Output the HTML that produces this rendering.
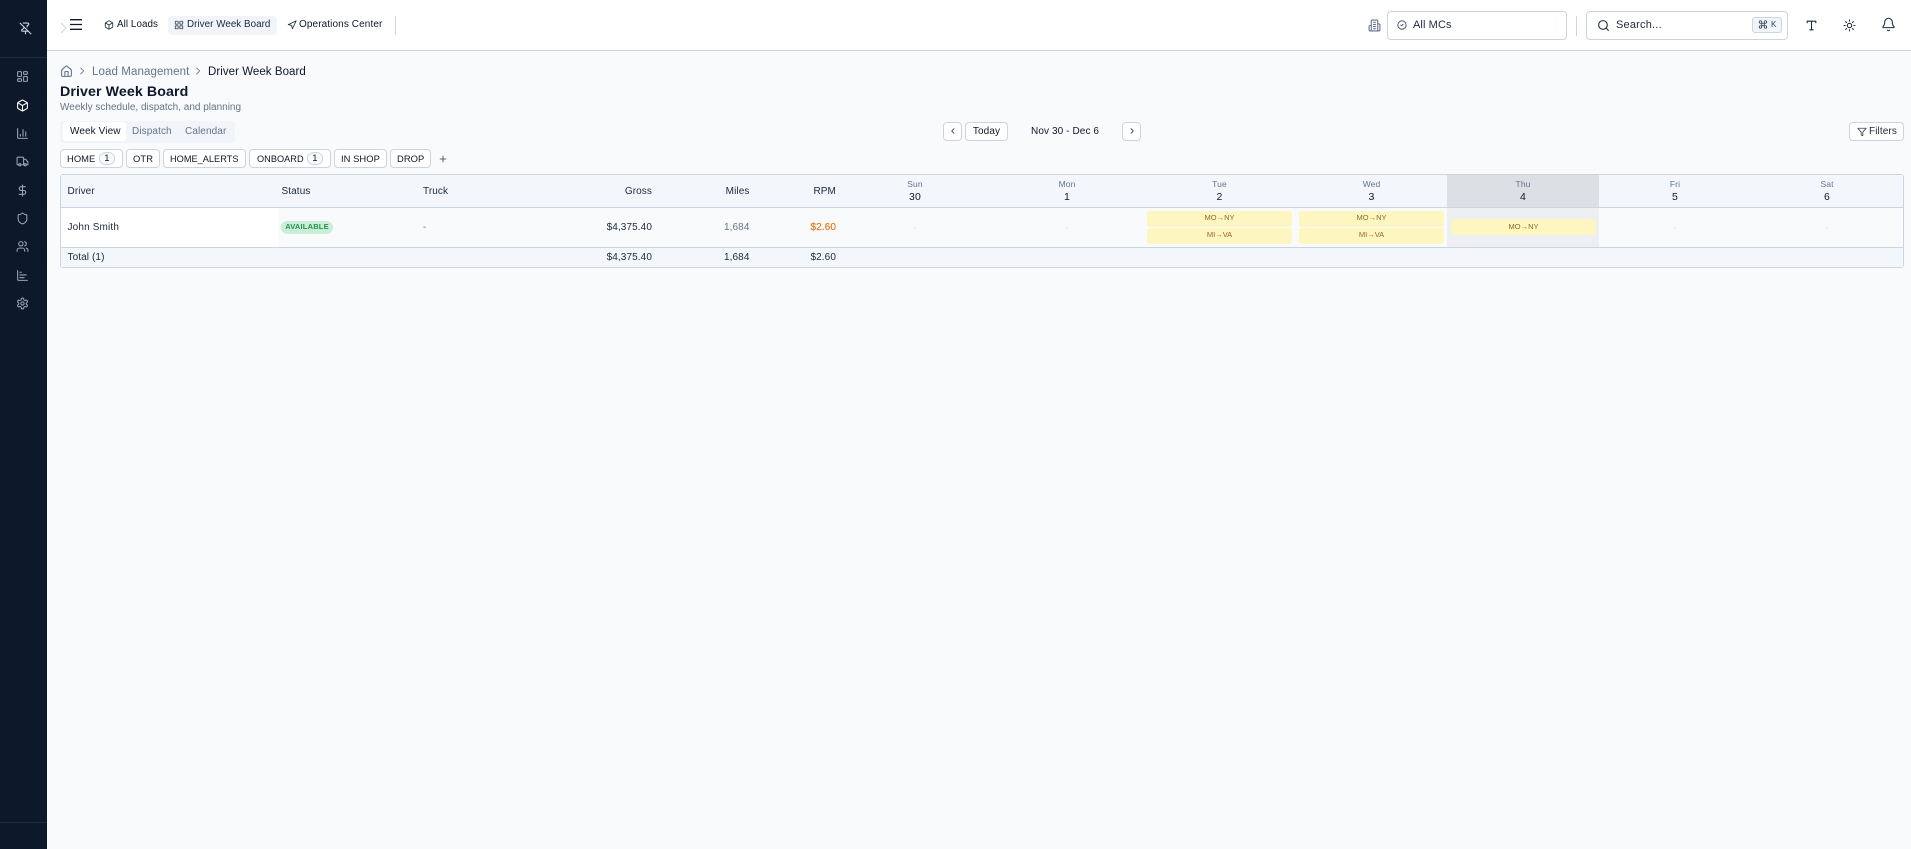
<!DOCTYPE html>
<html lang="en"><head><meta charset="utf-8"><title>Driver Week Board</title>
<style>
*{box-sizing:border-box}
html,body{margin:0;padding:0;width:1911px;height:849px;overflow:hidden;background:#f8fafc;font-family:"Liberation Sans",sans-serif;color:#0f172a}
.a{position:absolute}
.t{position:absolute;white-space:nowrap;line-height:14px;font-size:10.5px;letter-spacing:.1px}
.r{text-align:right}
.c{text-align:center;transform:translateX(-50%)}
svg{position:absolute;fill:none;stroke:currentColor;stroke-width:2;stroke-linecap:round;stroke-linejoin:round}
.btn{position:absolute;background:#fff;border:1px solid #cbd5e1;border-radius:4px}
.badge{position:absolute;background:#f8fafc;border:1px solid #cbd5e1;border-radius:8px;height:13px;top:152px;width:16px}
.side{color:#94a3b8}
.card{position:absolute;background:#fef6c0;border-radius:3px;height:16px;width:145px;text-align:center;color:#92672a;font-size:7.5px;line-height:14px}
</style></head><body>

<!-- sidebar -->
<div class="a" style="left:0;top:0;width:47px;height:849px;background:#0d182b"></div>
<div class="a" style="left:0;top:57px;width:47px;height:1px;background:#1f2b3e"></div>
<div class="a" style="left:0;top:822px;width:47px;height:1px;background:#1f2b3e"></div>
<svg viewBox="0 0 24 24" width="13" height="13" style="left:19px;top:22px;color:#cbd5e1"><path d="M12 17v5"/><path d="M15 9.34V7a1 1 0 0 1 1-1 2 2 0 0 0 0-4H7.89"/><path d="m2 2 20 20"/><path d="M9 9v1.76a2 2 0 0 1-1.11 1.79l-1.78.9A2 2 0 0 0 5 15.24V16a1 1 0 0 0 1 1h11"/></svg>
<svg class="side" viewBox="0 0 24 24" width="13" height="13" style="left:16px;top:70px"><rect x="3" y="3" width="7" height="9" rx="1"/><rect x="14" y="3" width="7" height="5" rx="1"/><rect x="14" y="12" width="7" height="9" rx="1"/><rect x="3" y="16" width="7" height="5" rx="1"/></svg>
<svg viewBox="0 0 24 24" width="13" height="13" style="left:16px;top:99px;color:#fff"><path d="M21 8a2 2 0 0 0-1-1.73l-7-4a2 2 0 0 0-2 0l-7 4A2 2 0 0 0 3 8v8a2 2 0 0 0 1 1.73l7 4a2 2 0 0 0 2 0l7-4A2 2 0 0 0 21 16Z"/><path d="m3.3 7 8.7 5 8.7-5"/><path d="M12 22V12"/></svg>
<svg class="side" viewBox="0 0 24 24" width="13" height="13" style="left:16px;top:127px"><path d="M3 3v16a2 2 0 0 0 2 2h16"/><path d="M18 17V9"/><path d="M13 17V5"/><path d="M8 17v-3"/></svg>
<svg class="side" viewBox="0 0 24 24" width="13" height="13" style="left:16px;top:155px"><path d="M14 18V6a2 2 0 0 0-2-2H4a2 2 0 0 0-2 2v11a1 1 0 0 0 1 1h2"/><path d="M15 18H9"/><path d="M19 18h2a1 1 0 0 0 1-1v-3.65a1 1 0 0 0-.22-.624l-3.48-4.35A1 1 0 0 0 17.52 8H14"/><circle cx="17" cy="18" r="2"/><circle cx="7" cy="18" r="2"/></svg>
<svg class="side" viewBox="0 0 24 24" width="13" height="13" style="left:16px;top:184px"><path d="M12 2v20"/><path d="M17 5H9.5a3.5 3.5 0 0 0 0 7h5a3.5 3.5 0 0 1 0 7H6"/></svg>
<svg class="side" viewBox="0 0 24 24" width="13" height="13" style="left:16px;top:212px"><path d="M20 13c0 5-3.5 7.5-7.66 8.95a1 1 0 0 1-.67-.01C7.5 20.5 4 18 4 13V6a1 1 0 0 1 1-1c2 0 4.5-1.2 6.24-2.72a1.17 1.17 0 0 1 1.52 0C14.51 3.81 17 5 19 5a1 1 0 0 1 1 1z"/></svg>
<svg class="side" viewBox="0 0 24 24" width="13" height="13" style="left:16px;top:240px"><path d="M16 21v-2a4 4 0 0 0-4-4H6a4 4 0 0 0-4 4v2"/><circle cx="9" cy="7" r="4"/><path d="M22 21v-2a4 4 0 0 0-3-3.87"/><path d="M16 3.13a4 4 0 0 1 0 7.75"/></svg>
<svg class="side" viewBox="0 0 24 24" width="13" height="13" style="left:16px;top:269px"><path d="M3 3v16a2 2 0 0 0 2 2h16"/><path d="M7 16h8"/><path d="M7 11h12"/><path d="M7 6h3"/></svg>
<svg class="side" viewBox="0 0 24 24" width="13" height="13" style="left:16px;top:297px"><path d="M12.22 2h-.44a2 2 0 0 0-2 2v.18a2 2 0 0 1-1 1.73l-.43.25a2 2 0 0 1-2 0l-.15-.08a2 2 0 0 0-2.73.73l-.22.38a2 2 0 0 0 .73 2.73l.15.1a2 2 0 0 1 1 1.72v.51a2 2 0 0 1-1 1.74l-.15.09a2 2 0 0 0-.73 2.73l.22.38a2 2 0 0 0 2.73.73l.15-.08a2 2 0 0 1 2 0l.43.25a2 2 0 0 1 1 1.73V20a2 2 0 0 0 2 2h.44a2 2 0 0 0 2-2v-.18a2 2 0 0 1 1-1.73l.43-.25a2 2 0 0 1 2 0l.15.08a2 2 0 0 0 2.73-.73l.22-.39a2 2 0 0 0-.73-2.73l-.15-.08a2 2 0 0 1-1-1.74v-.5a2 2 0 0 1 1-1.74l.15-.09a2 2 0 0 0 .73-2.73l-.22-.38a2 2 0 0 0-2.73-.73l-.15.08a2 2 0 0 1-2 0l-.43-.25a2 2 0 0 1-1-1.73V4a2 2 0 0 0-2-2z"/><circle cx="12" cy="12" r="3"/></svg>

<!-- header -->
<div class="a" style="left:47px;top:0;width:1864px;height:51px;background:#fff;border-bottom:1px solid #cbd5e1"></div>
<svg viewBox="0 0 24 24" width="12" height="12" style="left:57px;top:22px;color:#cbd5e1"><path d="m9 3 9 9-9 9"/></svg>
<svg viewBox="0 0 12 11" width="12" height="11" style="left:70px;top:19px;stroke-width:1.3;stroke-linecap:butt;color:#0f172a"><path d="M0 .7h12M0 5.5h12M0 10.3h12"/></svg>
<svg viewBox="0 0 24 24" width="10" height="10" style="left:104px;top:20px;color:#1e293b"><path d="M21 8a2 2 0 0 0-1-1.73l-7-4a2 2 0 0 0-2 0l-7 4A2 2 0 0 0 3 8v8a2 2 0 0 0 1 1.73l7 4a2 2 0 0 0 2 0l7-4A2 2 0 0 0 21 16Z"/><path d="m3.3 7 8.7 5 8.7-5"/><path d="M12 22V12"/></svg>
<span class="t" style="left:117px;top:18px;font-size:9.8px;letter-spacing:.08px">All Loads</span>
<div class="a" style="left:168px;top:16px;width:109px;height:19px;background:#f1f5f9;border-radius:4px"></div>
<svg viewBox="0 0 24 24" width="10" height="10" style="left:174px;top:20px;color:#334155"><rect x="3" y="3" width="7" height="7" rx="1"/><rect x="14" y="3" width="7" height="7" rx="1"/><rect x="14" y="14" width="7" height="7" rx="1"/><rect x="3" y="14" width="7" height="7" rx="1"/></svg>
<span class="t" style="left:187px;top:18px;font-size:9.8px;letter-spacing:.05px;color:#1e293b">Driver Week Board</span>
<svg viewBox="0 0 24 24" width="10" height="10" style="left:287px;top:20px;color:#1e293b"><path d="M3 11 22 2 13 21 11 13Z"/></svg>
<span class="t" style="left:299px;top:18px;font-size:10px;letter-spacing:.1px">Operations Center</span>
<div class="a" style="left:395px;top:16px;width:1px;height:19px;background:#cbd5e1"></div>

<svg viewBox="0 0 24 24" width="13" height="13" style="left:1368px;top:19px;color:#64748b"><path d="M6 22V4a2 2 0 0 1 2-2h8a2 2 0 0 1 2 2v18Z"/><path d="M6 12H4a2 2 0 0 0-2 2v6a2 2 0 0 0 2 2h2"/><path d="M18 9h2a2 2 0 0 1 2 2v9a2 2 0 0 1-2 2h-2"/><path d="M10 6h4M10 10h4M10 14h4M10 18h4"/></svg>
<div class="btn" style="left:1387px;top:11px;width:180px;height:29px"></div>
<svg viewBox="0 0 24 24" width="10" height="10" style="left:1397px;top:20px;color:#334155"><circle cx="12" cy="12" r="10"/><path d="m9 12 2 2 4-4"/></svg>
<span class="t" style="left:1413px;top:18px;font-size:11px;color:#1e293b">All MCs</span>
<div class="a" style="left:1576px;top:16px;width:1px;height:20px;background:#cbd5e1"></div>
<div class="btn" style="left:1586px;top:11px;width:202px;height:29px"></div>
<svg viewBox="0 0 24 24" width="13" height="13" style="left:1597px;top:19px;color:#1e293b"><circle cx="11" cy="11" r="8"/><path d="m21 21-4.3-4.3"/></svg>
<span class="t" style="left:1616px;top:18px;font-size:11px;color:#1e293b;letter-spacing:.2px">Search...</span>
<div class="a" style="left:1752px;top:17px;width:30px;height:16px;background:#f1f5f9;border:1px solid #cbd5e1;border-radius:3px"></div>
<svg viewBox="0 0 24 24" width="10" height="11" style="left:1758px;top:19px;color:#334155"><path d="M15 6v12a3 3 0 1 0 3-3H6a3 3 0 1 0 3 3V6a3 3 0 1 0-3 3h12a3 3 0 1 0-3-3"/></svg>
<span class="t" style="left:1771px;top:18px;font-size:8px;color:#334155">K</span>
<svg viewBox="0 0 24 24" width="13" height="13" style="left:1805px;top:19px;color:#1e293b"><path d="M12 4v16"/><path d="M4 7V4h16v3"/><path d="M9 20h6"/></svg>
<svg viewBox="0 0 24 24" width="13" height="13" style="left:1843px;top:19px;color:#1e293b"><circle cx="12" cy="12" r="4"/><path d="M12 2v2M12 20v2M4.93 4.93l1.41 1.41M17.66 17.66l1.41 1.41M2 12h2M20 12h2M6.34 17.66l-1.41 1.41M19.07 4.93l-1.41 1.41"/></svg>
<svg viewBox="0 0 24 24" width="15" height="15" style="left:1881px;top:17px;color:#1e293b;stroke-width:1.7"><path d="M10.268 21a2 2 0 0 0 3.464 0"/><path d="M3.262 15.326A1 1 0 0 0 4 17h16a1 1 0 0 0 .74-1.673C19.41 13.956 18 12.499 18 8A6 6 0 0 0 6 8c0 4.499-1.411 5.956-2.738 7.326"/></svg>

<!-- breadcrumb -->
<svg viewBox="0 0 24 24" width="13" height="13" style="left:60px;top:65px;color:#64748b"><path d="M15 21v-8a1 1 0 0 0-1-1h-4a1 1 0 0 0-1 1v8"/><path d="M3 10a2 2 0 0 1 .709-1.528l7-5.999a2 2 0 0 1 2.582 0l7 5.999A2 2 0 0 1 21 10v9a2 2 0 0 1-2 2H5a2 2 0 0 1-2-2z"/></svg>
<svg viewBox="0 0 24 24" width="10" height="10" style="left:77px;top:66px;color:#64748b"><path d="m9 5 7 7-7 7"/></svg>
<span class="t" style="left:92px;top:65px;font-size:11.5px;color:#64748b;letter-spacing:.1px">Load Management</span>
<svg viewBox="0 0 24 24" width="10" height="10" style="left:193px;top:66px;color:#64748b"><path d="m9 5 7 7-7 7"/></svg>
<span class="t" style="left:208px;top:65px;font-size:11.5px;color:#0f172a;letter-spacing:.05px">Driver Week Board</span>
<span class="t" style="left:60px;top:84.5px;font-size:14.2px;font-weight:bold;color:#0f172a">Driver Week Board</span>
<span class="t" style="left:60px;top:101px;font-size:10px;color:#64748b;letter-spacing:0">Weekly schedule, dispatch, and planning</span>

<!-- tabs -->
<div class="a" style="left:60px;top:121px;width:175px;height:22px;background:#f1f5f9;border-radius:4px"></div>
<div class="a" style="left:63px;top:122px;width:63px;height:19px;background:#fff;border-radius:3px"></div>
<span class="t" style="left:70px;top:125px;font-size:10px;color:#0f172a;letter-spacing:.1px">Week View</span>
<span class="t" style="left:132px;top:125px;font-size:10px;color:#64748b;letter-spacing:.1px">Dispatch</span>
<span class="t" style="left:185px;top:125px;font-size:10px;color:#64748b;letter-spacing:.1px">Calendar</span>

<!-- week nav -->
<div class="btn" style="left:943px;top:122px;width:19px;height:19px"></div>
<svg viewBox="0 0 24 24" width="8" height="8" style="left:948.5px;top:127px;color:#1e293b;stroke-width:2.4"><path d="m15 5-7 7 7 7"/></svg>
<div class="btn" style="left:965px;top:122px;width:43px;height:19px"></div>
<span class="t c" style="left:986.5px;top:125px;font-size:10px;letter-spacing:.1px">Today</span>
<span class="t" style="left:1031px;top:125px;font-size:10px;letter-spacing:.1px">Nov 30 - Dec 6</span>
<div class="btn" style="left:1122px;top:122px;width:19px;height:19px"></div>
<svg viewBox="0 0 24 24" width="8" height="8" style="left:1127.5px;top:127px;color:#1e293b;stroke-width:2.4"><path d="m9 5 7 7-7 7"/></svg>
<div class="btn" style="left:1849px;top:122px;width:55px;height:19px"></div>
<svg viewBox="0 0 24 24" width="10" height="10" style="left:1857px;top:126.5px;color:#334155"><path d="M22 3H2l8 9.46V19l4 2v-8.54L22 3Z"/></svg>
<span class="t" style="left:1869px;top:125px;font-size:10px;color:#1e293b">Filters</span>

<!-- chips -->
<div class="btn" style="left:60px;top:149px;width:63px;height:19px"></div>
<span class="t" style="left:67px;top:152px;font-size:9.4px;letter-spacing:.05px">HOME</span>
<div class="badge" style="left:99px"></div><span class="t c" style="left:107px;top:152px;font-size:9.5px">1</span>
<div class="btn" style="left:126px;top:149px;width:34px;height:19px"></div>
<span class="t" style="left:133px;top:152px;font-size:9.4px">OTR</span>
<div class="btn" style="left:163px;top:149px;width:83px;height:19px"></div>
<span class="t" style="left:170px;top:152px;font-size:9.2px;letter-spacing:.02px">HOME_ALERTS</span>
<div class="btn" style="left:249px;top:149px;width:82px;height:19px"></div>
<span class="t" style="left:257px;top:152px;font-size:9.2px;letter-spacing:.02px">ONBOARD</span>
<div class="badge" style="left:307px"></div><span class="t c" style="left:315px;top:152px;font-size:9.5px">1</span>
<div class="btn" style="left:334px;top:149px;width:53px;height:19px"></div>
<span class="t" style="left:341px;top:152px;font-size:9.4px;letter-spacing:.05px">IN SHOP</span>
<div class="btn" style="left:390px;top:149px;width:41px;height:19px"></div>
<span class="t" style="left:397px;top:152px;font-size:9.4px;letter-spacing:.05px">DROP</span>
<svg viewBox="0 0 24 24" width="10" height="10" style="left:438px;top:154px;color:#334155"><path d="M5 12h14M12 5v14"/></svg>

<!-- table -->
<div class="a" style="left:60px;top:174px;width:1844px;height:94px;background:#f8fafc;border:1px solid #cbd5e1;border-radius:3px"></div>
<div class="a" style="left:61px;top:175px;width:1842px;height:32px;background:#f3f6fa"></div>
<div class="a" style="left:61px;top:248px;width:1842px;height:19px;background:#f3f6fa"></div>
<div class="a" style="left:61px;top:208px;width:217px;height:39px;background:#fff"></div>
<div class="a" style="left:1447px;top:175px;width:152px;height:32px;background:#dcdfe3"></div>
<div class="a" style="left:1447px;top:208px;width:152px;height:39px;background:#eeeff3"></div>
<div class="a" style="left:61px;top:207px;width:1842px;height:1px;background:#cbd5e1"></div>
<div class="a" style="left:61px;top:247px;width:1842px;height:1px;background:#cbd5e1"></div>

<span class="t" style="left:67.5px;top:185px;font-size:10px;color:#1e293b;letter-spacing:.1px">Driver</span>
<span class="t" style="left:281.5px;top:185px;font-size:10px;color:#1e293b;letter-spacing:.1px">Status</span>
<span class="t" style="left:423px;top:185px;font-size:10px;color:#1e293b;letter-spacing:.1px">Truck</span>
<span class="t r" style="right:1259px;top:185px;font-size:10px;color:#1e293b">Gross</span>
<span class="t r" style="right:1161.5px;top:185px;font-size:10px;color:#1e293b">Miles</span>
<span class="t r" style="right:1075px;top:185px;font-size:10px;color:#1e293b">RPM</span>

<span class="t c" style="left:915px;top:177px;font-size:8.5px;color:#64748b">Sun</span><span class="t c" style="left:915px;top:190px;font-size:10.5px">30</span>
<span class="t c" style="left:1067px;top:177px;font-size:8.5px;color:#64748b">Mon</span><span class="t c" style="left:1067px;top:190px;font-size:10.5px">1</span>
<span class="t c" style="left:1219.5px;top:177px;font-size:8.5px;color:#64748b">Tue</span><span class="t c" style="left:1219.5px;top:190px;font-size:10.5px">2</span>
<span class="t c" style="left:1371.5px;top:177px;font-size:8.5px;color:#64748b">Wed</span><span class="t c" style="left:1371.5px;top:190px;font-size:10.5px">3</span>
<span class="t c" style="left:1523px;top:177px;font-size:8.5px;color:#64748b">Thu</span><span class="t c" style="left:1523px;top:190px;font-size:10.5px">4</span>
<span class="t c" style="left:1675px;top:177px;font-size:8.5px;color:#64748b">Fri</span><span class="t c" style="left:1675px;top:190px;font-size:10.5px">5</span>
<span class="t c" style="left:1827px;top:177px;font-size:8.5px;color:#64748b">Sat</span><span class="t c" style="left:1827px;top:190px;font-size:10.5px">6</span>

<span class="t" style="left:67.5px;top:220.5px;font-size:10px;color:#1e293b;letter-spacing:.15px">John Smith</span>
<div class="a" style="left:281px;top:221px;width:52px;height:13px;background:#c9eed7;border-radius:7px;text-align:center;font-size:7.5px;font-weight:bold;line-height:12px;color:#26904f;letter-spacing:.2px">AVAILABLE</div>
<span class="t" style="left:423px;top:221px;font-size:10px;color:#64748b">-</span>
<span class="t r" style="right:1259px;top:221px;font-size:10px;color:#1e293b">$4,375.40</span>
<span class="t r" style="right:1161.5px;top:221px;font-size:10px;color:#64748b">1,684</span>
<span class="t r" style="right:1075px;top:221px;font-size:10px;color:#e67e1a;-webkit-text-stroke:.2px #e67e1a">$2.60</span>

<span class="t c" style="left:915px;top:221px;font-size:8px;color:#cbd5e1">-</span>
<span class="t c" style="left:1067px;top:221px;font-size:8px;color:#cbd5e1">-</span>
<span class="t c" style="left:1675px;top:221px;font-size:8px;color:#cbd5e1">-</span>
<span class="t c" style="left:1827px;top:221px;font-size:8px;color:#cbd5e1">-</span>

<div class="card" style="left:1147px;top:211px">MO→NY</div>
<div class="card" style="left:1147px;top:228px;height:16px">MI→VA</div>
<div class="card" style="left:1299px;top:211px">MO→NY</div>
<div class="card" style="left:1299px;top:228px;height:16px">MI→VA</div>
<div class="card" style="left:1451px;top:219px;line-height:15px">MO→NY</div>

<span class="t" style="left:67.5px;top:251px;font-size:10px;color:#1e293b;letter-spacing:.1px">Total (1)</span>
<span class="t r" style="right:1259px;top:251px;font-size:10px;color:#1e293b">$4,375.40</span>
<span class="t r" style="right:1161.5px;top:251px;font-size:10px;color:#1e293b">1,684</span>
<span class="t r" style="right:1075px;top:251px;font-size:10px;color:#1e293b">$2.60</span>
</body></html>
